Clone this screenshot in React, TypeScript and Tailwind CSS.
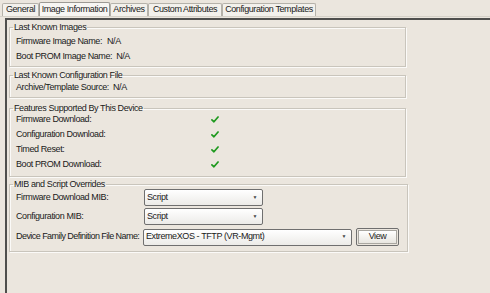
import React from "react";

const tabs = [
    { label: "General", w: "w-[37px]" },
    { label: "Image Information", w: "w-[71px]" },
    { label: "Archives", w: "w-[38px]" },
    { label: "Custom Attributes", w: "w-[74px]" },
    { label: "Configuration Templates", w: "w-[94px]" },
];

function Check() {
    return (
        <svg width="8" height="7" viewBox="0 0 9 8">
            <path
                d="M1 4.5 L3.3 6.6 L8 1.2"
                fill="none"
                stroke="#1f9a1f"
                strokeWidth="2"
                strokeLinecap="round"
                strokeLinejoin="round"
            />
        </svg>
    );
}

function Group({
    title,
    className,
    children,
}: {
    title: string;
    className: string;
    children: React.ReactNode;
}) {
    return (
        <fieldset
            className={`border border-[#c9c5bc] shadow-[inset_1px_1px_0_#fbfaf8,1px_1px_0_#fbfaf8] pl-[6px] pr-2 ${className}`}
        >
            <legend className="ml-[-3px] px-[1px] h-[11px] leading-[11px]">{title}</legend>
            {children}
        </fieldset>
    );
}

function Select({ value, width }: { value: string; width: string }) {
    return (
        <div
            className={`${width} h-[17px] flex items-center justify-between rounded-[2px] border border-[#6f6f6f] bg-gradient-to-b from-white to-[#ecebe8] pl-[2px] pr-[5px]`}
        >
            <span>{value}</span>
            <span className="text-[5px] text-[#444]">▼</span>
        </div>
    );
}

export default function App() {
    return (
        <div className="w-[490px] h-[293px] overflow-hidden whitespace-nowrap bg-[#ebe6de] text-[9px] tracking-[-0.4px] text-[#1a1a1a] font-['Liberation_Sans',Arial,sans-serif]">
            <div className="flex pl-[2px] pt-[2px] h-[16px] items-end">
                {tabs.map((t) => (
                    <div
                        key={t.label}
                        className={
                            t.label === "Image Information"
                                ? `${t.w} h-[14px] flex items-center justify-center bg-[#f7f6f3] border border-b-0 border-[#9c9a94] rounded-t-[2px]`
                                : `${t.w} h-[13px] flex items-center justify-center bg-[#f3f1ec] border border-b-0 border-[#b5b2aa] rounded-t-[2px]`
                        }
                    >
                        {t.label}
                    </div>
                ))}
            </div>
            <div className="h-[2px] border-t border-[#d5d1c8]" />
            <div className="ml-[5px] h-[280px] border-l-[2px] border-t-[2px] border-[#4f4f4d] pl-[2px] pt-[2px]">
                <div className="w-[397px] flex flex-col">
                    <Group title="Last Known Images" className="pb-[2px]">
                        <div className="flex h-[17px] items-center">
                            <span className="w-[91px]">Firmware Image Name:</span>
                            <span>N/A</span>
                        </div>
                        <div className="flex h-[14px] items-center">
                            <span className="mr-[4px]">Boot PROM Image Name:</span>
                            <span>N/A</span>
                        </div>
                    </Group>
                    <Group title="Last Known Configuration File" className="mt-[3px] pb-[2px]">
                        <div className="flex h-[14px] items-center">
                            <span className="mr-[4px]">Archive/Template Source:</span>
                            <span>N/A</span>
                        </div>
                    </Group>
                    <Group title="Features Supported By This Device" className="mt-[5px] pb-[4px]">
                        <div className="-mt-[2px]">
                            {[
                                "Firmware Download:",
                                "Configuration Download:",
                                "Timed Reset:",
                                "Boot PROM Download:",
                            ].map((f) => (
                                <div key={f} className="flex h-[15px] items-center">
                                    <span className="w-[195px]">{f}</span>
                                    <Check />
                                </div>
                            ))}
                        </div>
                    </Group>
                    <Group title="MIB and Script Overrides" className="mt-[2px] pb-[5px]">
                        <div className="flex flex-col -mt-[1px]">
                            <div className="flex items-center h-[17px]">
                                <span className="w-[128px]">Firmware Download MIB:</span>
                                <Select value="Script" width="w-[119px]" />
                            </div>
                            <div className="flex items-center h-[17px] mt-[2px]">
                                <span className="w-[128px]">Configuration MIB:</span>
                                <Select value="Script" width="w-[119px]" />
                            </div>
                            <div className="flex items-center h-[18px] mt-[3px]">
                                <span className="w-[127px] tracking-[-0.55px]">Device Family Definition File Name:</span>
                                <Select value="ExtremeXOS - TFTP (VR-Mgmt)" width="w-[209px]" />
                                <div className="ml-[4px] w-[43px] h-[18px] rounded-[2px] border border-[#6f6f6f] p-[1px]">
                                    <div className="h-full border border-[#a9a7a1] bg-gradient-to-b from-white to-[#e8e6e0] flex items-center justify-center">
                                        View
                                    </div>
                                </div>
                            </div>
                        </div>
                    </Group>
                </div>
            </div>
        </div>
    );
}
